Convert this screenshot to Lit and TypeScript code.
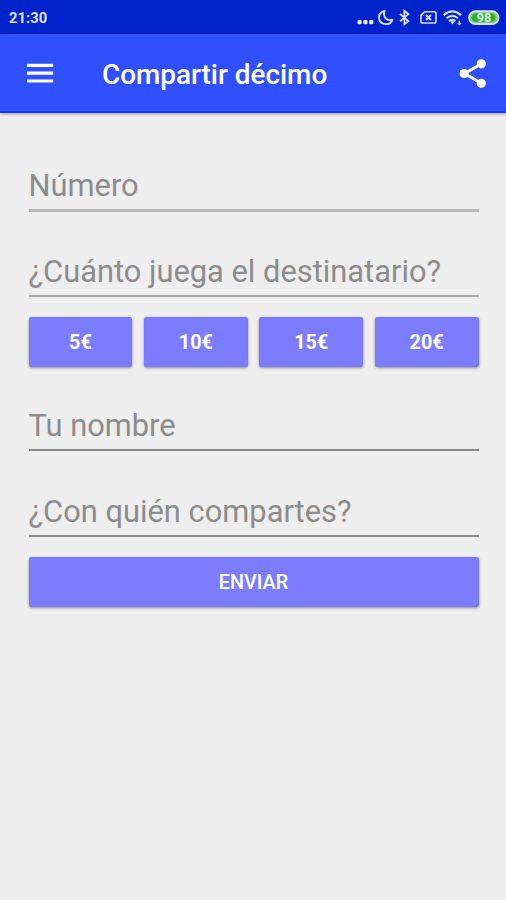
import { LitElement, html, css } from "lit";
import { customElement, property } from "lit/decorators.js";

@customElement("status-bar")
class StatusBar extends LitElement {
  static styles = css`
    :host {
      display: flex;
      align-items: center;
      box-sizing: border-box;
      height: 34px;
      padding: 1px 6px 0 9px;
      background: #0023cc;
      border-bottom: 1px solid #0420ae;
      color: #dde2ff;
      font: 700 14.8px/20px Roboto, sans-serif;
    }
    .time { flex: 1; padding-top: 2px; }
    .icons { display: block; width: 144px; height: 24px; }
    .level { font: 700 12.5px Roboto, sans-serif; fill: #e4f6e4; }
  `;
  render() {
    return html`
      <span class="time">21:30</span>
      <svg class="icons" viewBox="356 5 144 24" fill="none" stroke="#d5dbff" stroke-width="1.6">
        <g fill="#e4e8ff" stroke="none">
          <rect x="357.5" y="20" width="4.2" height="4.2" rx="1" />
          <rect x="363.3" y="20" width="4.2" height="4.2" rx="1" />
          <rect x="369.1" y="20" width="4.2" height="4.2" rx="1" />
        </g>
        <path d="M384.6 10.6C380.6 12.2 378.4 15.2 379.1 18.8C380.6 25.6 390.4 26 392.4 19.6C386.6 21.6 382.6 16.6 384.6 10.6Z" stroke-linejoin="round" stroke-width="1.9" />
        <path d="M400 13.9L408.4 21.2L404.4 24.2V11L408.4 14.1L400 21.4" stroke-width="1.9" />
        <path d="M424.6 11.8H434.2Q436 11.8 436 13.6V21.2Q436 23 434.2 23H422.8Q421 23 421 21.2V15.2Z" stroke-width="1.6" />
        <path d="M426 15L431 20M431 15L426 20" stroke-width="2" />
        <path d="M443.7 15.1Q452.3 7.8 460.9 15.1M446.4 18.2Q452.3 13.5 458 18.2M449 21.1Q452.3 18.6 455.5 21.1" stroke-width="2.1" />
        <path d="M450 21.6H454.6L452.3 24.6Z" fill="#d5dbff" stroke="none" />
        <path d="M459.3 20.8V25M457.6 23L459.3 24.7L461 23" stroke-width="1.5" stroke="#aeb9ff" />
        <rect x="469" y="11.2" width="29.6" height="13" rx="6.5" fill="#8fc995" stroke="#dce3ff" stroke-width="1.7" />
        <rect x="471.4" y="13.3" width="24" height="8.8" rx="4.4" fill="#28b528" stroke="none" />
        <text class="level" x="484" y="22" text-anchor="middle" stroke="none">98</text>
      </svg>
    `;
  }
}

@customElement("app-bar")
class AppBar extends LitElement {
  static styles = css`
    :host {
      display: flex;
      align-items: center;
      box-sizing: border-box;
      height: 79px;
      padding: 1px 19px 0 27px;
      background: #304ffe;
      border-bottom: 2px solid #1738dc;
      box-shadow: 0 1px 3px rgba(0, 0, 0, 0.35);
      color: #fff;
    }
    .menu { display: block; width: 27px; height: 20px; margin-right: 48px; }
    .title { flex: 1; font: 500 27.9px/36px Roboto, sans-serif; padding-top: 3px; }
    .share { display: block; width: 28px; height: 32px; }
  `;
  render() {
    return html`
      <svg class="menu" viewBox="0 0 27 20" fill="#fff">
        <path d="M0 0.8H26.2V3.9H0ZM0 8.6H26.2V11.7H0ZM0 16.4H26.2V19.5H0Z" />
      </svg>
      <span class="title">Compartir décimo</span>
      <svg class="share" viewBox="0 -0.5 28 32" fill="#fff">
        <path d="M22.3 6.3L5.6 16L22.3 25.8" fill="none" stroke="#fff" stroke-width="2.9" />
        <circle cx="22.3" cy="6.3" r="4.6" />
        <circle cx="5.2" cy="16" r="4.6" />
        <circle cx="22.3" cy="25.8" r="4.6" />
      </svg>
    `;
  }
}

@customElement("text-field")
class TextField extends LitElement {
  static styles = css`
    :host {
      display: block;
      box-sizing: border-box;
      height: 43px;
      color: #8c8c8c;
      font: 400 30.85px/36px Roboto, sans-serif;
      white-space: nowrap;
      border-bottom: 2px solid #aaa;
    }
    :host([tone="light"]) { border-bottom: 3px solid #b9b9b9; height: 44px; }
    :host([tone="dark"]) { border-bottom: 2px solid #888; }
  `;
  @property() label = "";
  render() {
    return html`${this.label}`;
  }
}

@customElement("raised-button")
class RaisedButton extends LitElement {
  static styles = css`
    :host {
      display: flex;
      align-items: center;
      justify-content: center;
      box-sizing: border-box;
      height: 50.5px;
      padding-top: 2px;
      border-radius: 3px;
      background: #7c7cff;
      box-shadow: 0 1px 3px rgba(0, 0, 0, 0.42), inset 0 0 1px #5f62ee;
      color: #fff;
      font: 500 19.8px/24px Roboto, sans-serif;
    }
  `;
  render() {
    return html`<slot></slot>`;
  }
}

@customElement("app-root")
class AppRoot extends LitElement {
  static styles = css`
    :host {
      display: flex;
      flex-direction: column;
      height: 900px;
      background: #eee;
    }
    .form { display: flex; flex-direction: column; padding: 55px 27.5px 0 28.5px; }
    .second { margin-top: 42px; }
    .amounts {
      display: grid;
      grid-template-columns: repeat(4, 1fr);
      gap: 11.5px;
      margin: 19.5px 0 41px;
    }
    .amounts raised-button { font-weight: 700; }
    .last { margin-top: 43px; }
    .send { margin-top: 19.5px; }
  `;
  render() {
    return html`
      <status-bar></status-bar>
      <app-bar></app-bar>
      <div class="form">
        <text-field tone="light" label="Número"></text-field>
        <text-field class="second" label="¿Cuánto juega el destinatario?"></text-field>
        <div class="amounts">
          ${[5, 10, 15, 20].map((n) => html`<raised-button>${n}€</raised-button>`)}
        </div>
        <text-field tone="dark" label="Tu nombre"></text-field>
        <text-field tone="dark" class="last" label="¿Con quién compartes?"></text-field>
        <raised-button class="send">ENVIAR</raised-button>
      </div>
    `;
  }
}
